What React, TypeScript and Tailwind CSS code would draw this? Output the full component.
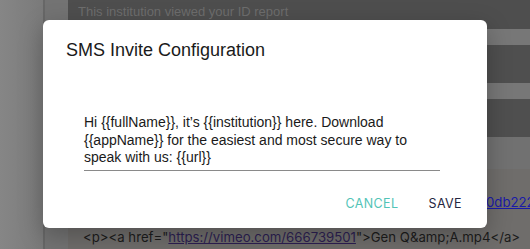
import React from 'react';

const BandRow = ({ className }: { className: string }) => <div className={className} />;

export default function App() {
  return (
    <div className="relative w-[530px] h-[249px] overflow-hidden flex bg-[#6f6d6b]">
      {/* --- BACKDROP PAGE --- */}
      <div className="w-[43px] shrink-0 h-full bg-gradient-to-r from-[#868686] to-[#7a7a7a]" />
      <div className="w-[2px] shrink-0 h-full bg-[#676767]" />
      <div className="w-[23px] shrink-0 h-full bg-[#737373]" />
      <div className="flex-1 flex flex-col min-w-0 overflow-hidden">
        <div className="h-[29px] bg-[#4e4e4e] flex items-center pl-[10px] pb-[6px]">
          <span className="text-[13px] text-[#6d6d6d] whitespace-nowrap font-['Liberation_Sans',Arial,sans-serif]">This institution viewed your ID report</span>
        </div>
        <BandRow className="h-[16px] bg-[#777777]" />
        <BandRow className="h-[38px] bg-[#4f4f4f]" />
        <BandRow className="h-[16px] bg-[#777777]" />
        <BandRow className="h-[38px] bg-[#4f4f4f]" />
        <BandRow className="h-[32px] bg-[#717171]" />
        <div className="flex-1 bg-[#6f6d6b] flex flex-col pl-[15px] overflow-hidden font-['Inter',sans-serif] text-[13.2px] text-[#1c1c1c]">
          <div className="mt-[24px] h-[18px] leading-[18px] pl-[403px] whitespace-nowrap">
            <span className="text-[#1a1aa8] underline">0db2222</span>
          </div>
          <div className="mt-[16px] whitespace-nowrap leading-[20px]">
            &lt;p&gt;&lt;a href="<span className="underline text-[#2c1f52]">https://vimeo.com/666739501</span>"&gt;Gen Q&amp;amp;A.mp4&lt;/a&gt;
          </div>
        </div>
      </div>

      {/* --- DIALOG --- */}
      <div className="absolute left-[43px] top-[20px] w-[444px] h-[208px] bg-white rounded-[6px] shadow-[0_8px_24px_rgba(0,0,0,0.25)] flex flex-col">
        <h2 className="pl-[23px] pt-[18px] text-[18px] leading-[24px] text-[#1a1a1a] font-['Liberation_Sans',Arial,sans-serif]">
          SMS Invite Configuration
        </h2>
        <div className="mt-[52px] ml-[41px] mr-[47px] border-b border-[#8a8a8a] pb-[3px]">
          <p className="text-[14px] leading-[17.5px] text-[#1a1a1a] font-['Liberation_Sans',Arial,sans-serif]">
            Hi {'{{fullName}}'}, it’s {'{{institution}}'} here. Download {'{{appName}}'} for the easiest and most secure way to speak with us: {'{{url}}'}
          </p>
        </div>
        <div className="mt-auto mb-[8px] flex justify-end items-center gap-[14px] pr-[17px] font-['Inter',sans-serif] text-[12.5px] tracking-[0.4px]">
          <button className="px-[8px] py-[6px] text-[#52c4b7]">CANCEL</button>
          <button className="px-[8px] py-[6px] text-[#262640]">SAVE</button>
        </div>
      </div>
    </div>
  );
}
